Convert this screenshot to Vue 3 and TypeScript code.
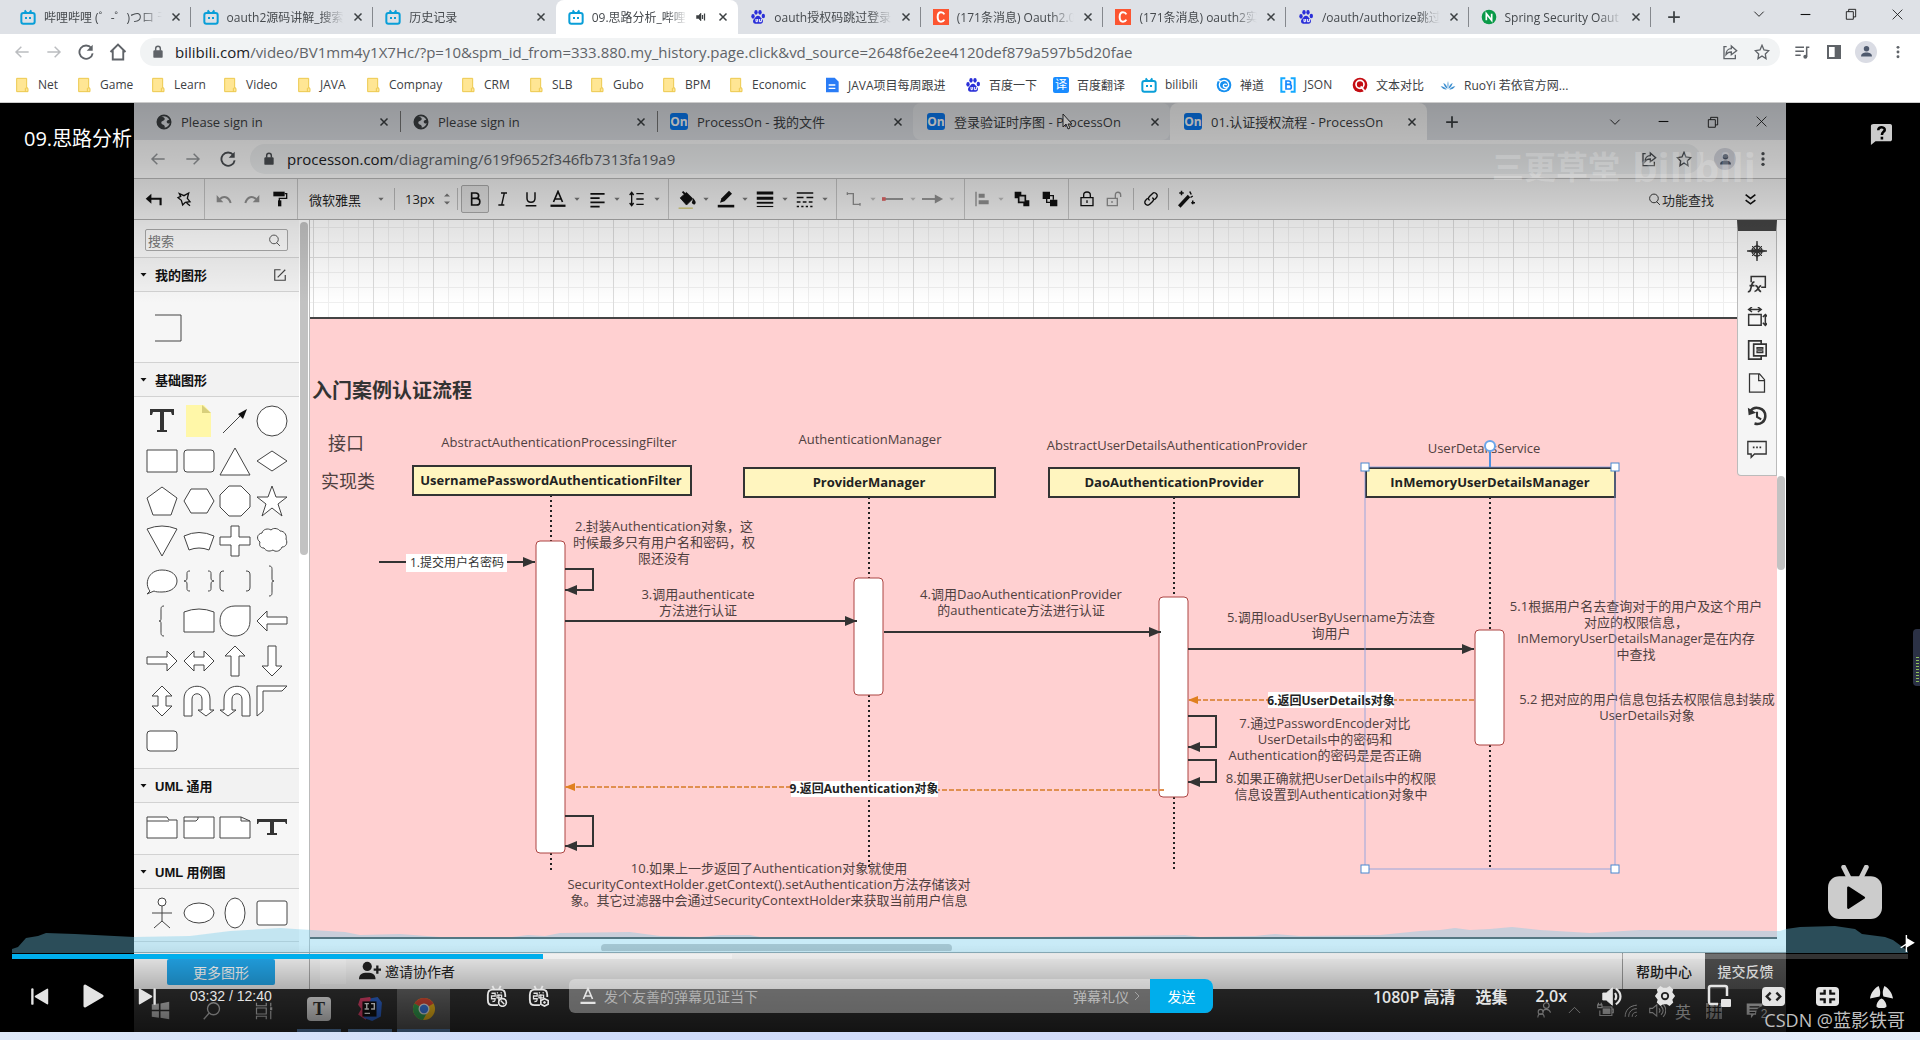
<script setup lang="ts">
import { h } from 'vue'

const glyphs: Record<string, string> = {
  bili: '<g stroke="#0a9fd8" stroke-width="3"><rect x="2" y="6" width="20" height="16" rx="3"/><path d="M7 2l3 4M17 2l-3 4M9 12v3M15 12v3"/></g>',
  paw: '<g fill="#2a2fd8" stroke="none"><ellipse cx="4.500" cy="11" rx="2.500" ry="3.500"/><ellipse cx="9" cy="5" rx="2.500" ry="3.500"/><ellipse cx="15" cy="5" rx="2.500" ry="3.500"/><ellipse cx="20" cy="10.500" rx="2.500" ry="3.500"/><path d="M12 10c3 0 4 3 6 5 3 3 1 8-3 7h-6c-4 1-6-4-3-7 2-2 3-5 6-5z"/></g><path d="M9 15v4h2v-4M14 15v4h3v-4" stroke="#fff" stroke-width="1.500"/>',
  csdn: '<rect width="24" height="24" fill="#fc5531" stroke="none"/><path d="M17 8c-1-2-3-3-5-3-4 0-5 3-5 7s1 7 5 7c2 0 4-1 5-3" stroke="#fff" stroke-width="3"/>',
  nginx: '<circle cx="12" cy="12" r="11" fill="#0a9a48" stroke="none"/><path d="M8 17V7l8 10V7" stroke="#fff" stroke-width="2.500"/>',
  close: '<path d="M5 5l14 14M19 5L5 19" stroke-width="3"/>',
  plus: '<path d="M12 2v20M2 12h20" stroke-width="3"/>',
  sound: '<path d="M3 9h4l5-5v16l-5-5H3z" fill="currentColor"/><path d="M15 8v8M19 5v14" stroke-width="2.500"/>',
  chev: '<path d="M4 8l8 8 8-8" stroke-width="1.500"/>',
  up: '<path d="M3 16l9-9 9 9" stroke-width="1.500"/>',
  min: '<path d="M3 12h18" stroke-width="2"/>',
  restore: '<path d="M4 8h12v13H4zM8 8V4h12v13h-4" stroke-width="1.500"/>',
  closeThin: '<path d="M3 3l18 18M21 3L3 21" stroke-width="1.500"/>',
  left: '<path d="M22 12H3M11 4l-8 8 8 8" stroke-width="2.200"/>',
  right: '<path d="M2 12h19M13 4l8 8-8 8" stroke-width="2.200"/>',
  reload: '<path d="M20 6a10 10 0 1 0 2 8" stroke-width="2.800"/><path d="M22 1v9h-9z" fill="currentColor" stroke="none"/>',
  home: '<path d="M2 12L12 2l10 10M5 10v12h14V10" stroke-width="2.500"/>',
  lock: '<rect x="4" y="9" width="16" height="13" rx="2" fill="currentColor" stroke="none"/><path d="M8 10V6a4 4 0 0 1 8 0v4" stroke-width="2.500"/>',
  share: '<path d="M7 4H3v18h17v-6" stroke-width="2"/><path d="M14 3l8 7-8 6v-4c-4 0-6 1-8 4 0-5 3-9 8-9z" stroke-width="2"/>',
  star: '<path d="M12 2l3 7 7 1-5 5 1 7-6-4-6 4 1-7-5-5 7-1z" stroke-width="2"/>',
  list: '<path d="M2 5h13M2 11h13M2 17h8M19 19V5h4" stroke-width="2.300"/><circle cx="17" cy="19" r="3" fill="currentColor" stroke="none"/>',
  panel: '<path d="M3 3h18v18H3z" stroke-width="3"/><path d="M13 3h8v18h-8z" fill="currentColor" stroke="none"/>',
  person: '<g fill="currentColor" stroke="none"><circle cx="12" cy="7" r="5"/><path d="M2 21c0-5 4-7 10-7s10 2 10 7z"/></g>',
  dots: '<g fill="currentColor" stroke="none"><circle cx="12" cy="4" r="2.500"/><circle cx="12" cy="12" r="2.500"/><circle cx="12" cy="20" r="2.500"/></g>',
  folder: '<path d="M4 2h15v14l2 1v5H4z" fill="#ffe694" stroke="#edc94f" stroke-width="1.500"/><path d="M17 22v-5l3-1" stroke="#edc94f" stroke-width="1.500"/>',
  doc: '<path d="M3 1h13l6 6v16H3z" fill="#2a7cf6" stroke="none"/><path d="M7 12h10M7 17h10" stroke="#fff" stroke-width="2"/>',
  zen: '<circle cx="12" cy="12" r="11" fill="#1790f0" stroke="none"/><path d="M17 17a7 7 0 1 1 2-5c0 5-8 5-8 1 0-3 4-3 5-1M3 5l5 2" stroke="#fff" stroke-width="2"/>',
  json: '<path d="M8 2H2v20h6M16 2h6v20h-6" stroke="#14a9ff" stroke-width="3"/><path d="M9 6h4c4 0 4 5 0 5H9zM9 11h5c4 0 4 7 0 7H9z" stroke="#1487ff" stroke-width="2.500"/>',
  diff: '<circle cx="12" cy="12" r="11" fill="#c40d13" stroke="none"/><circle cx="12" cy="11" r="6" stroke="#fff" stroke-width="2.500"/><path d="M13 14l6 7" stroke="#fff" stroke-width="2.500"/>',
  ruoyi: '<path d="M12 18c-1-5-1-8 0-12 1 4 1 7 0 12zM11 18C8 16 6 13 5 9c4 2 6 5 6 9zM13 18c0-4 2-7 6-9-1 4-3 7-6 9zM10 19c-4 0-7-2-9-5 4 0 7 2 9 5zM14 19c2-3 5-5 9-5-2 3-5 5-9 5z" fill="#3d8fd0" stroke="none"/>',
  globe: '<circle cx="12" cy="12" r="10" stroke-width="2.500"/><path d="M5 4c5 0 9 1 8 4s-5 2-5 5 4 2 5 5-1 4-2 4C5 21 2 16 2 11zM22 9c-4-1-6 1-6 3 1 3 4 2 5 2z" fill="currentColor" stroke="none"/>',
  reply: '<path d="M22 20v-9H4" stroke-width="3"/><path d="M9 4v14l-8-7z" fill="currentColor" stroke="none"/>',
  pinstar: '<path d="M5 4l7 3 7-4-2 8 4 5-7 1-4 4-2-7-5-4 4-2zM16 18l5 4" stroke-width="2"/>',
  undo: '<path d="M6 12c5-5 13-4 16 6" stroke-width="3"/><path d="M1 6v11h10z" fill="currentColor" stroke="none"/>',
  redo: '<path d="M18 12C13 7 5 8 2 18" stroke-width="3"/><path d="M23 6v11H13z" fill="currentColor" stroke="none"/>',
  roller: '<path d="M2 1h17v7H2z" fill="currentColor" stroke="none"/><path d="M19 4h3v7H11v4" stroke-width="2"/><path d="M9 14h5v9H9z" fill="currentColor" stroke="none"/>',
  tri: '<path d="M4 8h16l-8 9z" fill="currentColor" stroke="none"/>',
  spin: '<path d="M6 7l6-6 6 6zM6 17l6 6 6-6z" fill="currentColor" stroke="none"/>',
  bold: '<path d="M7 3h6c6 0 6 8 0 8H7zM7 11h7c7 0 7 10 0 10H7z" stroke-width="2.500"/>',
  italic: '<path d="M9 3h9M5 21h9M14 3l-4 18" stroke-width="2"/>',
  under: '<path d="M6 2v9c0 8 12 8 12 0V2M4 22h16" stroke-width="2.200"/>',
  fontA: '<path d="M6 16l6-14 6 14M8 12h8" stroke-width="2.200"/><path d="M2 21h20" stroke-width="3"/>',
  align: '<path d="M2 4h20M2 10h13M2 16h20M2 22h13" stroke-width="2.300"/>',
  spacing: '<path d="M11 4h11M11 12h11M11 20h11M4 3v18M1 6l3-4 3 4M1 18l3 4 3-4" stroke-width="2"/>',
  fill: '<path d="M4 10l8-7 8 8-8 8z" fill="currentColor"/><path d="M7 2l6 6M21 13c3 4 0 5-1 3z" stroke-width="2.500"/><path d="M2 23h18" stroke="#d8cf85" stroke-width="2"/>',
  pen: '<path d="M4 17l2-6L16 1l4 4L10 15z" fill="currentColor" stroke="none"/><path d="M1 21.500h22" stroke-width="3.500"/>',
  weight: '<path d="M1 4h22M1 11h22" stroke-width="4"/><path d="M1 17h22" stroke-width="2.500"/><path d="M1 22h22" stroke-width="1.500"/>',
  dash: '<path d="M1 4h22" stroke-width="2"/><path d="M1 10h22" stroke-width="2" stroke-dasharray="9 4"/><path d="M1 16h22" stroke-width="2" stroke-dasharray="5 3"/><path d="M1 22h22" stroke-width="2" stroke-dasharray="3 3"/>',
  conn: '<path d="M2 4h9v16h10M2 2v4M21 18v4" stroke-width="2"/>',
  line: '<path d="M1 12h22" stroke-width="2"/><path d="M0 12h4" stroke="#d66" stroke-width="4"/>',
  arrow: '<path d="M0 12h16" stroke-width="2"/><path d="M14 7l9 5-9 5z" fill="currentColor" stroke="none"/>',
  alignObj: '<path d="M3 1v22" stroke-width="2"/><path d="M7 4h9v6H7zM7 14h15v6H7z" fill="currentColor" stroke="none"/>',
  front: '<path d="M1 1h10v10H1zM14 14h9v9h-9z" fill="currentColor" stroke="none"/><path d="M7 7h10v10H7z" fill="#ddd" stroke-width="2.500"/>',
  back: '<path d="M1 1h11v11H1zM12 13h11v10H12z" fill="currentColor" stroke="none"/><path d="M12 7h5v6M7 12v5h5" stroke-width="2"/>',
  lockO: '<path d="M3 10h18v12H3zM7 10V6c0-6 10-6 10 0v4M12 14v4" stroke-width="2"/>',
  unlock: '<path d="M2 11h15v11H2zM14 11V6c0-6 8-5 8 0v3M9 15v3" stroke-width="2"/>',
  link: '<path d="M10 14c-3-2-2-4 0-6l4-4c4-4 10 2 6 6l-3 3M14 10c3 2 2 4 0 6l-4 4c-4 4-10-2-6-6l3-3" stroke-width="2"/>',
  wand: '<path d="M3 22L16 8" stroke-width="4.500"/><path d="M17 2l2 4M21 8l-3 2M6 1v6M3 4h6M21 14v5M19 17h5" stroke-width="2"/>',
  find: '<circle cx="11" cy="10" r="8" stroke-width="1.800"/><path d="M16 16l6 6" stroke-width="1.800"/>',
  dchev: '<path d="M3 3l9 7 9-7M3 13l9 7 9-7" stroke-width="3"/>',
  edit: '<path d="M13 3H3v18h18V12M8 16L21 3" stroke-width="2"/>',
  compass: '<path d="M12 0l1 10 11 2-11 2-1 10-1-10-11-2 11-2z" fill="currentColor"/><circle cx="12" cy="12" r="6" stroke-width="1.600"/><path d="M6 6l12 12M18 6L6 18" stroke-width="1.200"/>',
  fx: '<path d="M5 10V3h17v13h-5" stroke-width="1.800"/><path d="M9 10c-3-1-3 3-4 6s-1 6-4 5M3 14h6M10 14c4 0 3 7 7 7M17 14c-3 0-4 7-8 7" stroke-width="2"/>',
  size: '<path d="M2 9h15v13H2zM3 3h13M6 0L2 3l4 3M13 0l4 3-4 3M22 9v13M19 12l3-3 3 3M19 19l3 3 3-3" stroke-width="1.800"/>',
  pages: '<path d="M17 5V1H2v22h15v-3M8 5h15v14H8z" stroke-width="2"/><path d="M12 9h7v2h-7zM12 13h7v2h-7z" stroke-width="1.500"/>',
  page: '<path d="M3 1h12l6 7v15H3zM14 1v8h7" stroke-width="1.500"/>',
  history: '<path d="M4 6c5-7 18-4 18 6 0 7-6 11-13 9" stroke-width="3"/><path d="M1 2l1 9 9-3z" fill="currentColor" stroke="none"/><path d="M12 7v6l5 3" stroke-width="2.500"/>',
  chat: '<path d="M1 3h22v15H9l-4 4v-4H1z" stroke-width="1.600"/><path d="M7 10h2M11 10h2M15 10h2" stroke-width="2"/>',
  invite: '<g fill="currentColor" stroke="none"><circle cx="9" cy="7" r="5"/><path d="M0 21c0-5 3-7 9-7s9 2 9 7z"/></g><path d="M20 6v9M16 10.500h8" stroke-width="2.500"/>',
  windows: '<path d="M1 4l9-1v8H1zM12 3l11-2v10H12zM1 13h9v8l-9-1zM12 13h11v10l-11-2z" fill="currentColor" stroke="none"/>',
  loupe: '<circle cx="14" cy="9" r="8" stroke-width="1.800"/><path d="M8 15l-7 8" stroke-width="1.800"/>',
  tasks: '<path d="M2 1v4h13V1M2 8h13v8H2zM2 23v-4h13v4M21 1v5M21 12v11" stroke-width="1.600"/><path d="M20 7h3v4h-3z" fill="currentColor" stroke="none"/>',
  idea: '<path d="M3 2l9-1 4 8-8 13-7-5 3-5-3-4z" fill="#e0416b" stroke="none"/><path d="M13 2l6-1 4 5-1 13-8 4-8-3z" fill="#2e66d0" stroke="none"/><path d="M5 5h13v14H5z" fill="#111" stroke="none"/><path d="M7 7h4M9 7v5M7 12h4M13 7h3v5h-3M7 16h5" stroke="#fff" stroke-width="1.300"/>',
  chrome: '<circle cx="12" cy="12" r="11" fill="#f5bc1c" stroke="none"/><path d="M12 12L2.500 6.500A11 11 0 0 1 21.500 6.500z" fill="#e04a38" stroke="none"/><path d="M12 12L2.500 6.500A11 11 0 0 0 11 23l5-9z" fill="#35a553" stroke="none"/><circle cx="12" cy="12" r="5.500" fill="#eee" stroke="none"/><circle cx="12" cy="12" r="4.200" fill="#3f80e8" stroke="none"/>',
  people: '<circle cx="16" cy="5" r="4" stroke-width="1.600"/><path d="M11 14c1-5 9-5 11 1M4 22c0-7 9-7 9 0" stroke-width="1.600"/><circle cx="8" cy="14" r="3.500" stroke-width="1.600"/>',
  battery: '<path d="M7 7h14v12H4V12M21 10h2v5h-2M1 4h6v4H1zM2 1v3M6 1v3" stroke-width="1.600"/><path d="M8 9h11v8H8z" fill="currentColor" stroke="none"/>',
  wifi: '<path d="M2 22C2 10 10 3 22 2M8 22C8 14 13 8 22 8M14 22c0-5 3-8 8-8M19 22l3-3" stroke-width="1.700"/>',
  volThin: '<path d="M1 9h4l6-5v16l-6-5H1zM14 9c2 2 2 4 0 6M17 6c4 4 4 8 0 12M20 3c5 6 5 12 0 18" stroke-width="1.500"/>',
  note: '<path d="M1 2h22v16H11l-4 5v-5H1z" fill="currentColor" stroke="none"/><path d="M5 7h14M5 11h14M5 15h8" stroke="#222" stroke-width="1.800"/>',
  prev: '<path d="M3 3v18" stroke-width="3" stroke-linecap="round"/><path d="M22 3v18L7 12z" fill="currentColor" stroke-linejoin="round" stroke-width="2"/>',
  play: '<path d="M4 2l17 10L4 22z" fill="currentColor" stroke-width="3" stroke-linejoin="round"/>',
  next: '<path d="M21 3v18" stroke-width="3" stroke-linecap="round"/><path d="M2 3v18l15-9z" fill="currentColor" stroke-linejoin="round" stroke-width="2"/>',
  barrage: '<path d="M13 22H7c-4 0-5-2-5-6v-5c0-4 2-6 5-6h9c4 0 5 2 5 6v2M7 1l2 4M16 1l-2 4" stroke-width="2"/><path d="M6 9h4v3H6v3h4c0 3-1 3-3 3M12 8l1 1M17 8l-1 1M12 11h5v3h-5zM14 10v7" stroke-width="1.400"/><circle cx="18" cy="19" r="4.200" stroke-width="1.800"/><path d="M16 17l4 4" stroke-width="1.500"/>',
  barrageSet: '<path d="M13 22H7c-4 0-5-2-5-6v-5c0-4 2-6 5-6h9c4 0 5 2 5 6v2M7 1l2 4M16 1l-2 4" stroke-width="2"/><path d="M6 9h4v3H6v3h4c0 3-1 3-3 3M12 8l1 1M17 8l-1 1M12 11h5v3h-5zM14 10v7" stroke-width="1.400"/><path d="M18 15l4 2v4l-4 2-4-2v-4z" stroke-width="1.800"/><circle cx="18" cy="19" r="1" fill="currentColor"/>',
  volume: '<path d="M2 8h4l7-6v20l-7-6H2z" fill="currentColor"/><path d="M16 8c2 3 2 5 0 8M17 3c7 5 7 13 0 18" stroke-width="2.500"/>',
  gear: '<path d="M7 1l3 2h4l3-2 4 4-1 3 3 4-3 4 1 3-4 4-3-2h-4l-3 2-4-4 1-3-3-4 3-4-1-3z" fill="currentColor" stroke="none"/><circle cx="12" cy="12" r="4.500" fill="#222" stroke="none"/><circle cx="12" cy="12" r="2.500" fill="currentColor" stroke="none"/>',
  pip: '<path d="M11 20H4c-2 0-2-1-2-3V4c0-2 1-2 2-2h14c2 0 2 1 2 2v8" stroke-width="2.500"/><rect x="14" y="15" width="10" height="8" rx="1" fill="currentColor" stroke="none"/>',
  webfull: '<rect x="0" y="2" width="24" height="20" rx="4" fill="currentColor" stroke="none"/><path d="M9 8l-4 4 4 4M15 8l4 4-4 4" stroke="#222" stroke-width="2.500"/>',
  full: '<rect x="0" y="2" width="24" height="20" rx="4" fill="currentColor" stroke="none"/><path d="M9 5v4H4M15 5v4h5M9 19v-4H4M15 19v-4h5" stroke="#111" stroke-width="2.500"/>',
  fan: '<g fill="currentColor" stroke="none"><path d="M9 1c2 5 2 8 1 11L0 14C1 8 4 4 9 1zM15 1c-2 5-2 8-1 11l10 2c-1-6-4-10-9-13zM12 14c3 1 6 6 5 9-3 2-7 2-10 0-1-3 2-8 5-9z"/></g>',
  help: '<path d="M4 1h18c1 0 2 1 2 2v15c0 1-1 2-2 2H6l-5 4V3c0-1 1-2 3-2z" fill="#ccc" stroke="none"/><path d="M9 8c0-5 8-4 7 0-1 2-3 2-3 5M13 15v3" stroke="#000" stroke-width="2.800"/>',
  tv: '<path d="M7 1l3 6M17 1l-3 6" stroke="#ccc" stroke-width="2.200" stroke-linecap="round"/><rect x="0" y="5" width="24" height="19" rx="5" fill="#ccc" stroke="none"/><path d="M9 10l7 4.500L9 19z" fill="#000" stroke="#000" stroke-linejoin="round"/>',
  marker: '<path d="M9 0v24M1 18l8-5M9 5l10 6-10 6z" fill="#fff" stroke="#fff" stroke-width="2"/>',
}

const Ico = (p: { n: string; s?: number }) =>
  h('svg', {
    viewBox: '0 0 24 24', width: p.s ?? 16, height: p.s ?? 16,
    fill: 'none', stroke: 'currentColor', 'aria-hidden': 'true', innerHTML: glyphs[p.n],
  })
Ico.props = ['n', 's']

const tabs = [
  { icon: 'bili', t: '哔哩哔哩 (゜-゜)つロ 干' },
  { icon: 'bili', t: 'oauth2源码讲解_搜索_' },
  { icon: 'bili', t: '历史记录' },
  { icon: 'bili', t: '09.思路分析_哔哩', on: true },
  { icon: 'paw', t: 'oauth授权码跳过登录' },
  { icon: 'csdn', t: '(171条消息) Oauth2.0' },
  { icon: 'csdn', t: '(171条消息) oauth2实' },
  { icon: 'paw', t: '/oauth/authorize跳过' },
  { icon: 'nginx', t: 'Spring Security Oaut' },
]

const marks = [
  { i: 'folder', t: 'Net', w: 62 }, { i: 'folder', t: 'Game', w: 74 }, { i: 'folder', t: 'Learn', w: 72 },
  { i: 'folder', t: 'Video', w: 74 }, { i: 'folder', t: 'JAVA', w: 69 }, { i: 'folder', t: 'Compnay', w: 95 },
  { i: 'folder', t: 'CRM', w: 68 }, { i: 'folder', t: 'SLB', w: 61 }, { i: 'folder', t: 'Gubo', w: 72 },
  { i: 'folder', t: 'BPM', w: 67 }, { i: 'folder', t: 'Economic', w: 96 }, { i: 'doc', t: 'JAVA项目每周跟进', w: 141 },
  { i: 'paw', t: '百度一下', w: 88 }, { i: 'yi', t: '百度翻译', w: 88 }, { i: 'bili', t: 'bilibili', w: 75 },
  { i: 'zen', t: '禅道', w: 64 }, { i: 'json', t: 'JSON', w: 72 }, { i: 'diff', t: '文本对比', w: 88 },
  { i: 'ruoyi', t: 'RuoYi 若依官方网...', w: 140 },
]

const innerTabs = [
  { i: 'globe', t: 'Please sign in' }, { i: 'globe', t: 'Please sign in' },
  { i: 'on', t: 'ProcessOn - 我的文件' }, { i: 'on', t: '登录验证时序图 - ProcessOn', c: 'hover' },
  { i: 'on', t: '01.认证授权流程 - ProcessOn', c: 'on' },
]

interface Tool { i?: string; w: number; c?: string; s?: number; t?: string }
const tools: Tool[] = [
  { i: 'reply', w: 30, s: 17 }, { i: 'pinstar', w: 31 }, { w: 10, c: 'sep' },
  { i: 'undo', w: 29, c: 'dim' }, { i: 'redo', w: 28, c: 'dim' }, { i: 'roller', w: 27 }, { w: 8, c: 'sep' },
  { t: '微软雅黑', w: 70 }, { i: 'tri', w: 20, c: 'mid', s: 8 }, { w: 6, c: 'short' },
  { t: '13px', w: 44 }, { i: 'spin', w: 12, c: 'mid', s: 12 }, { w: 8, c: 'short' },
  { i: 'bold', w: 28, c: 'pressed' }, { i: 'italic', w: 28 }, { i: 'under', w: 28 },
  { i: 'fontA', w: 26, s: 18 }, { i: 'tri', w: 12, c: 'mid', s: 8 },
  { i: 'align', w: 28, s: 17 }, { i: 'tri', w: 12, c: 'mid', s: 8 },
  { i: 'spacing', w: 28 }, { i: 'tri', w: 11, c: 'mid', s: 8 }, { w: 12, c: 'sep' },
  { i: 'fill', w: 24, s: 19 }, { i: 'tri', w: 15, c: 'mid', s: 8 },
  { i: 'pen', w: 26, s: 18 }, { i: 'tri', w: 12, c: 'mid', s: 8 },
  { i: 'weight', w: 28, s: 18 }, { i: 'tri', w: 12, c: 'mid', s: 8 },
  { i: 'dash', w: 28, s: 18 }, { i: 'tri', w: 11, c: 'mid', s: 8 }, { w: 12, c: 'sep' },
  { i: 'conn', w: 24, c: 'dim' }, { i: 'tri', w: 14, c: 'faint', s: 8 },
  { i: 'line', w: 26, c: 'dim', s: 22 }, { i: 'tri', w: 14, c: 'faint', s: 8 },
  { i: 'arrow', w: 26, c: 'dim', s: 22 }, { i: 'tri', w: 12, c: 'faint', s: 8 }, { w: 12, c: 'sep' },
  { i: 'alignObj', w: 24, c: 'dim' }, { i: 'tri', w: 14, c: 'faint', s: 8 },
  { i: 'front', w: 28 }, { i: 'back', w: 28 }, { w: 9, c: 'sep' },
  { i: 'lockO', w: 27 }, { i: 'unlock', w: 28, c: 'dim' }, { w: 10, c: 'short' },
  { i: 'link', w: 26 }, { w: 8, c: 'short' }, { i: 'wand', w: 28, s: 18 },
]

const solid = 'fill="#333" stroke="none"'
const basic: string[] = [
  `<path ${solid} d="M4 4h24v6h-2l-1-3h-7v18h3v2H11v-2h3V7H7l-1 3H4z"/>`,
  '<path fill="#fff7a8" stroke="none" d="M3 0h18l7 8v24H3z"/><path fill="#d8cf7c" stroke="none" d="M19 0l9 8h-9z"/>',
  '<path d="M4 28L22 10"/><path fill="#111" stroke="none" d="M28 4l-4 10-5-5z"/>',
  '<circle cx="16" cy="16" r="15"/>',
  '<path d="M1 5h30v22H1z"/>',
  '<rect x="1" y="5" width="30" height="22" rx="3"/>',
  '<path d="M16 3l15 27H1z"/>',
  '<path d="M16 6l15 10-15 10L1 16z"/>',
  '<path d="M16 2l15 11-6 17H7L1 13z"/>',
  '<path d="M8 4h16l7 12-7 12H8L1 16z"/>',
  '<path d="M10 1h12l9 9v12l-9 9H10l-9-9V10z"/>',
  '<path d="M16 1l4 11h11l-9 7 4 12-10-8-10 8 4-12-9-7h11z"/>',
  '<path d="M1 4q15-6 30 0L16 31z"/>',
  '<path d="M1 11q15-7 30 0l-5 14q-10-4-20 0z"/>',
  '<path d="M12 1h8v11h11v8H20v11h-8V20H1v-8h11z"/>',
  '<path d="M6 8c1-4 6-5 9-3 3-3 8-1 9 1 5 0 7 5 6 8 2 4 0 8-4 8-2 5-7 5-9 3-4 2-7 1-9-2-4 0-5-3-4-6-4-3-3-8 2-9z"/>',
  '<path d="M4 26c-6-7-2-21 12-21 20 0 20 22 0 22-4 0-6 0-8-1l-7 3z"/>',
  '<path fill="none" d="M7 6c-3 0-3 1-3 3v4c0 2-1 3-3 3 2 0 3 1 3 3v4c0 2 0 3 3 3M25 6c3 0 3 1 3 3v4c0 2 1 3 3 3-2 0-3 1-3 3v4c0 2 0 3-3 3"/>',
  '<path fill="none" d="M5 6c-3 0-4 1-4 4v12c0 3 1 4 4 4M27 6c3 0 4 1 4 4v12c0 3-1 4-4 4"/>',
  '<path fill="none" d="M13 1c3 0 3 2 3 4v8c0 2 0 3 2 3-2 0-2 1-2 3v8c0 2 0 4-3 4"/>',
  '<path fill="none" d="M18 1c-3 0-3 2-3 4v8c0 2 0 3-2 3 2 0 2 1 2 3v8c0 2 0 4 3 4"/>',
  '<path d="M1 7q15-6 30 0v20H1z"/>',
  '<path d="M16 1h15v15c0 20-30 20-30 0 0-9 6-15 15-15z"/>',
  '<path d="M1 16l10-10v6h20v7H11v7z"/>',
  '<path d="M31 16L21 6v6H1v7h20v7z"/>',
  '<path d="M1 16l10-10v6h10V6l10 10-10 10v-6H11v6z"/>',
  '<path d="M16 1l10 10h-6v20h-8V11H6z"/>',
  '<path d="M16 31L6 21h6V1h8v20h6z"/>',
  '<path d="M16 1l10 10h-6v10h6L16 31 6 21h6V11H6z"/>',
  '<path d="M1 31V14C1-3 27-3 27 14v11h4l-8 6-8-6h4V14c0-7-10-7-10 0v17z"/>',
  '<path d="M31 31V14C31-3 5-3 5 14v11H1l8 6 8-6h-4V14c0-7 10-7 10 0v17z"/>',
  '<path d="M1 1h30l-5 5H7v20l-6 5z"/>',
  '<rect x="1" y="6" width="30" height="20" rx="3"/>',
]
const uml: string[] = [
  '<path d="M1 9V6h20l2 3h8v18H1zM1 10h22"/>',
  '<path d="M1 6h30v21H1zM1 10h12l2-2V6"/>',
  '<path d="M1 6h21l9 4v17H1zM22 6v4h9"/>',
  `<path ${solid} d="M1 8h30v5h-1l-1-2H18v11h3v2H11v-2h3V11H3l-1 2H1z"/>`,
]
const usecase: string[] = [
  '<path fill="none" d="M16 9v15M6 16h20M16 24l-8 7M16 24l8 7"/><circle cx="16" cy="5" r="4"/>',
  '<ellipse cx="16" cy="16" rx="15" ry="10"/>',
  '<ellipse cx="16" cy="16" rx="10" ry="15"/>',
  '<rect x="1" y="4" width="30" height="24" rx="2"/>',
]
const groups = [
  { name: '基础图形', cls: 'basic', items: basic },
  { name: 'UML 通用', cls: 'uml', items: uml },
  { name: 'UML 用例图', cls: 'usecase', items: usecase },
]

const lifelines = [
  { x: 551, bx: 413, bw: 278, by: 466, name: 'UsernamePasswordAuthenticationFilter', top: 541, bot: 853, end: 873 },
  { x: 869, bx: 744, bw: 251, by: 468, name: 'ProviderManager', top: 578, bot: 695, end: 870 },
  { x: 1174, bx: 1049, bw: 250, by: 468, name: 'DaoAuthenticationProvider', top: 597, bot: 797, end: 870 },
  { x: 1490, bx: 1366, bw: 249, by: 468, name: 'InMemoryUserDetailsManager', top: 630, bot: 745, end: 869 },
]
const ifaces = [
  { x: 559, y: 447, t: 'AbstractAuthenticationProcessingFilter' },
  { x: 870, y: 444, t: 'AuthenticationManager' },
  { x: 1177, y: 450, t: 'AbstractUserDetailsAuthenticationProvider' },
  { x: 1484, y: 453, t: 'UserDetailsService' },
]
const notes = [
  { x: 664, y: 531, l: ['2.封装Authentication对象，这', '时候最多只有用户名和密码，权', '限还没有'] },
  { x: 698, y: 599, l: ['3.调用authenticate', '方法进行认证'] },
  { x: 1021, y: 599, l: ['4.调用DaoAuthenticationProvider', '的authenticate方法进行认证'] },
  { x: 1331, y: 622, l: ['5.调用loadUserByUsername方法查', '询用户'] },
  { x: 1636, y: 611, l: ['5.1根据用户名去查询对于的用户及这个用户', '对应的权限信息，', 'InMemoryUserDetailsManager是在内存', '中查找'] },
  { x: 1647, y: 704, l: ['5.2 把对应的用户信息包括去权限信息封装成', 'UserDetails对象'] },
  { x: 1325, y: 728, l: ['7.通过PasswordEncoder对比', 'UserDetails中的密码和', 'Authentication的密码是是否正确'] },
  { x: 1331, y: 783, l: ['8.如果正确就把UserDetails中的权限', '信息设置到Authentication对象中'] },
  { x: 769, y: 873, l: ['10.如果上一步返回了Authentication对象就使用', 'SecurityContextHolder.getContext().setAuthentication方法存储该对', '象。其它过滤器中会通过SecurityContextHolder来获取当前用户信息'] },
]
const calls = [
  { x1: 379, x2: 535, y: 562 }, { x1: 565, x2: 857, y: 621 },
  { x1: 884, x2: 1161, y: 632 }, { x1: 1188, x2: 1474, y: 649 },
]
const loops = [
  { x: 565, a: 569, b: 590 }, { x: 565, a: 816, b: 846 },
  { x: 1188, a: 716, b: 747 }, { x: 1188, a: 760, b: 782 },
]
const handles = [[1365, 467], [1615, 467], [1365, 869], [1615, 869]]
const dock = ['compass', 'fx', 'size', 'pages', 'page', 'history', 'chat']
</script>

<template>
  <div class="screen">
    <header class="strip">
      <div class="tabs">
        <div v-for="(t, k) in tabs" :key="k" class="tab" :class="{ on: t.on, before: k === 2 }">
          <Ico :n="t.icon" :s="16" />
          <span class="label">{{ t.t }}</span>
          <Ico v-if="t.on" n="sound" :s="12" class="snd" />
          <button type="button" aria-label="关闭标签页"><Ico n="close" :s="12" /></button>
        </div>
      </div>
      <button type="button" class="add" aria-label="新标签页"><Ico n="plus" :s="14" /></button>
      <div class="wins">
        <button type="button" aria-label="搜索标签页"><Ico n="chev" :s="14" /></button>
        <button type="button" aria-label="最小化"><Ico n="min" :s="13" /></button>
        <button type="button" aria-label="还原"><Ico n="restore" :s="14" /></button>
        <button type="button" aria-label="关闭"><Ico n="closeThin" :s="13" /></button>
      </div>
    </header>

    <nav class="bar">
      <button type="button" class="off" aria-label="后退"><Ico n="left" /></button>
      <button type="button" class="off" aria-label="前进"><Ico n="right" /></button>
      <button type="button" aria-label="刷新"><Ico n="reload" /></button>
      <button type="button" aria-label="主页"><Ico n="home" :s="18" /></button>
      <div class="omni">
        <Ico n="lock" :s="14" />
        <a class="url" href="#"><b>bilibili.com</b>/video/BV1mm4y1X7Hc/?p=10&amp;spm_id_from=333.880.my_history.page.click&amp;vd_source=2648f6e2ee4120def879a597b5d20fae</a>
        <button type="button" aria-label="分享"><Ico n="share" /></button>
        <button type="button" aria-label="收藏"><Ico n="star" /></button>
      </div>
      <button type="button" aria-label="媒体"><Ico n="list" /></button>
      <button type="button" aria-label="侧边栏"><Ico n="panel" /></button>
      <button type="button" aria-label="用户"><span class="avatar"><Ico n="person" :s="13" /></span></button>
      <button type="button" aria-label="菜单"><Ico n="dots" :s="14" /></button>
    </nav>

    <nav class="marks">
      <a v-for="m in marks" :key="m.t" href="#" :style="{ width: m.w + 'px' }">
        <i v-if="m.i === 'yi'" class="yi">译</i>
        <Ico v-else :n="m.i" :s="16" />
        <span>{{ m.t }}</span>
      </a>
    </nav>

    <main class="player">
      <section class="frame">
        <div class="istrip">
          <div v-for="(t, k) in innerTabs" :key="k" class="itab" :class="t.c">
            <i v-if="t.i === 'on'" class="onlogo">On</i>
            <Ico v-else :n="t.i" :s="16" />
            <span class="label">{{ t.t }}</span>
            <button type="button" aria-label="关闭标签页"><Ico n="close" :s="12" /></button>
          </div>
          <button type="button" class="add" aria-label="新标签页"><Ico n="plus" :s="14" /></button>
          <div class="iwins">
            <button type="button" aria-label="搜索标签页"><Ico n="chev" :s="14" /></button>
            <button type="button" aria-label="最小化"><Ico n="min" :s="13" /></button>
            <button type="button" aria-label="还原"><Ico n="restore" :s="14" /></button>
            <button type="button" aria-label="关闭"><Ico n="closeThin" :s="13" /></button>
          </div>
        </div>
        <div class="ibar">
          <button type="button" class="off" aria-label="后退"><Ico n="left" /></button>
          <button type="button" class="off" aria-label="前进"><Ico n="right" /></button>
          <button type="button" aria-label="刷新"><Ico n="reload" /></button>
          <div class="iomni">
            <Ico n="lock" :s="14" />
            <a class="url" href="#"><b>processon.com</b>/diagraming/619f9652f346fb7313fa19a9</a>
            <button type="button" aria-label="分享"><Ico n="share" /></button>
            <button type="button" aria-label="收藏"><Ico n="star" /></button>
          </div>
          <button type="button" class="who" aria-label="用户"><span class="avatar"><Ico n="person" :s="13" /></span></button>
          <button type="button" aria-label="菜单"><Ico n="dots" :s="16" /></button>
        </div>
        <div class="tools">
          <template v-for="(t, k) in tools" :key="k">
            <span v-if="!t.i && !t.t" class="gap" :class="t.c" :style="{ width: t.w + 'px' }"></span>
            <button v-else type="button" class="tool" :class="[t.c, { word: t.t }]" :style="{ width: t.w + 'px' }">
              <Ico v-if="t.i" :n="t.i" :s="t.s ?? 16" />{{ t.t }}
            </button>
          </template>
          <button type="button" class="lookup"><Ico n="find" :s="13" />功能查找</button>
          <button type="button" class="more" aria-label="展开"><Ico n="dchev" :s="13" /></button>
        </div>

        <div class="work">
          <aside class="side">
            <div class="palette">
              <label class="search"><input type="text" placeholder="搜索" aria-label="搜索" /><Ico n="find" :s="13" /></label>
              <h3><Ico n="tri" :s="9" />我的图形<Ico n="edit" :s="14" class="edit" /></h3>
              <div class="mine"><svg width="27" height="28" fill="none" stroke="#444" stroke-width="1"><path d="M0 1h26v26H0" /></svg></div>
              <template v-for="g in groups" :key="g.name">
                <h3><Ico n="tri" :s="9" />{{ g.name }}</h3>
                <div class="shapes" :class="g.cls">
                  <svg v-for="(s, k) in g.items" :key="k" viewBox="0 0 32 32" width="32" height="32" fill="#fff" stroke="#444" v-html="s"></svg>
                </div>
              </template>
              <div class="rest"></div>
            </div>
            <div class="vscroll"><i></i></div>
          </aside>

          <div class="canvas">
            <svg class="diagram" viewBox="310 220 1468 731" width="1468" height="731">
              <defs>
                <pattern id="grid" x="313" y="257" width="60" height="60" patternUnits="userSpaceOnUse" shape-rendering="crispEdges">
                  <path d="M15 0h1v60h-1zM30 0h1v60h-1zM45 0h1v60h-1zM0 15h60v1H0zM0 30h60v1H0zM0 45h60v1H0z" fill="#efefef" />
                  <path d="M0 0h1v60H0zM0 0h60v1H0z" fill="#dcdcdc" />
                </pattern>
                <marker id="head" viewBox="0 0 12 10" refX="12" refY="5" markerWidth="12" markerHeight="10" markerUnits="userSpaceOnUse" orient="auto"><path d="M0 0l12 5-12 5z" fill="#333" /></marker>
                <marker id="headO" viewBox="0 0 10 8" refX="10" refY="4" markerWidth="10" markerHeight="8" markerUnits="userSpaceOnUse" orient="auto"><path d="M0 0l10 4-10 4z" fill="#e08020" /></marker>
              </defs>
              <rect x="310" y="220" width="1468" height="731" fill="#fff" />
              <rect x="310" y="220" width="1468" height="98" fill="url(#grid)" />
              <rect x="306" y="318" width="1480" height="620" fill="#ffd0d1" stroke="#444" stroke-width="2" />
              <text class="h" x="312" y="398">入门案例认证流程</text>
              <text class="k" x="346" y="450">接口</text>
              <text class="k" x="348" y="488">实现类</text>
              <text v-for="f in ifaces" :key="f.t" class="n" :x="f.x" :y="f.y">{{ f.t }}</text>
              <g v-for="l in lifelines" :key="l.x">
                <path class="dots" :d="`M${l.x} ${l.by + 29}V${l.top}M${l.x} ${l.bot}V${l.end}`" />
                <rect :x="l.bx" :y="l.by" :width="l.bw" height="29" fill="#fff5bf" stroke="#333" stroke-width="2" />
                <text class="b" :x="l.x" :y="l.by + 19">{{ l.name }}</text>
                <rect :x="l.x - 15" :y="l.top" width="29" :height="l.bot - l.top" rx="4" fill="#fff" stroke="#ac4543" />
              </g>
              <path v-for="c in calls" :key="c.y" class="call" :d="`M${c.x1} ${c.y}H${c.x2}`" marker-end="url(#head)" />
              <path v-for="c in loops" :key="c.a" class="call" :d="`M${c.x} ${c.a}h28V${c.b}H${c.x}`" marker-end="url(#head)" />
              <path class="ret" d="M1474 700H1188" marker-end="url(#headO)" />
              <path class="ret" d="M1164 790H938" />
              <path class="ret" d="M791 787H565" marker-end="url(#headO)" />
              <rect x="406" y="554" width="101" height="18" fill="#fff" />
              <text class="n dk" x="457" y="567">1.提交用户名密码</text>
              <rect x="1268" y="692" width="126" height="16" fill="#fff" />
              <text class="b r" x="1331" y="705">6.返回UserDetails对象</text>
              <rect x="791" y="781" width="147" height="16" fill="#fff" />
              <text class="b r" x="864" y="793">9.返回Authentication对象</text>
              <text v-for="n in notes" :key="n.x + n.y" class="n" :y="n.y"><tspan v-for="(s, k) in n.l" :key="k" :x="n.x" :y="n.y + k * 16">{{ s }}</tspan></text>
              <rect x="1365" y="467" width="250" height="402" fill="none" stroke="#7f9be0" stroke-opacity=".8" />
              <path d="M1490 451v16" stroke="#4a90e2" stroke-width="2" />
              <circle cx="1490" cy="446" r="5" fill="#fff" stroke="#6aa6ea" stroke-width="2" />
              <rect v-for="p in handles" :key="p.join()" :x="p[0] - 4" :y="p[1] - 4" width="8" height="8" fill="#fff" stroke="#4a88d0" />
              <rect x="601" y="944" width="351" height="8" rx="4" fill="#c4c4c4" />
            </svg>
            <div class="dock">
              <button v-for="d in dock" :key="d" type="button" :aria-label="d"><Ico :n="d" :s="20" /></button>
            </div>
          </div>
          <div class="vscroll outer"><i></i></div>
        </div>

        <div class="foot">
          <div class="moreShapes"><button type="button">更多图形</button></div>
          <i class="swatch"></i>
          <button type="button" class="invite"><Ico n="invite" :s="22" />邀请协作者</button>
          <button type="button" class="hc">帮助中心</button>
          <button type="button" class="fb">提交反馈</button>
        </div>
        <div class="taskbar">
          <div class="apps">
            <span><Ico n="windows" :s="19" /></span>
            <span><Ico n="loupe" :s="18" /></span>
            <span><Ico n="tasks" :s="18" /></span>
            <span class="run"><i class="typora">T</i></span>
            <span class="run"><Ico n="idea" :s="26" /></span>
            <span class="run cur"><Ico n="chrome" :s="24" /></span>
          </div>
          <div class="tray">
            <span><Ico n="people" :s="17" /></span><span class="wide"><Ico n="up" :s="15" /></span><span><Ico n="battery" :s="17" /></span>
            <span><Ico n="wifi" :s="14" /></span><span><Ico n="volThin" :s="17" /></span><span class="zh">英</span><span class="zh wide"><i>拼</i></span>
            <span class="nt"><Ico n="note" :s="17" /><b>2</b></span>
          </div>
        </div>
      </section>

      <div class="shade top"></div>
      <div class="shade bottom"></div>
      <div class="brand"><span>三更草堂</span><em>bilibili</em></div>
      <h1>09.思路分析</h1>
      <svg class="mouse" width="10" height="17" viewBox="0 0 10 17"><path d="M1 1v13l3-3 2 5 2-1-2-4h4z" fill="#bbb" stroke="#222" /></svg>
      <button type="button" class="helpBtn" aria-label="反馈"><Ico n="help" :s="22" /></button>
      <button type="button" class="tvBtn" aria-label="播放"><Ico n="tv" :s="54" /></button>
      <div class="meter"><i></i></div>

      <div class="overlay">
        <div class="progress">
          <svg viewBox="12 924 1896 29" preserveAspectRatio="none" height="29"><path d="M12 953V949L18 947L26 938L38 936L46 933L75 934L134 937L190 936L230 931L280 928L295 929L345 932L360 935L400 934L440 937L512 937L528 935L545 936L560 933L630 932L660 936L700 937L720 935L750 935L760 937L1040 937L1120 936L1185 935L1200 937L1255 936L1275 934L1300 936L1380 935L1420 931L1440 930L1455 928L1470 930L1490 929L1512 927L1540 930L1590 933L1640 930L1780 931L1786 929L1800 927L1835 926L1855 929L1862 934L1885 937L1893 940L1908 951V953z" fill="#71cbea" fill-opacity=".38" /></svg>
          <div class="track"><i class="buf"></i><i class="done"></i></div>
          <Ico n="marker" :s="17" class="thumb" />
        </div>
        <div class="controls">
          <button type="button" class="pn" aria-label="上一个"><Ico n="prev" :s="19" /></button>
          <button type="button" class="pn" aria-label="播放"><Ico n="play" :s="24" /></button>
          <button type="button" class="pn" aria-label="下一个"><Ico n="next" :s="19" /></button>
          <span class="time">03:32 / 12:40</span>
          <button type="button" class="dm" aria-label="弹幕开关"><Ico n="barrage" :s="22" /></button>
          <button type="button" class="dm" aria-label="弹幕设置"><Ico n="barrageSet" :s="22" /></button>
          <form class="send" @submit.prevent>
            <Ico n="fontA" :s="18" />
            <input type="text" placeholder="发个友善的弹幕见证当下" aria-label="弹幕" />
            <a href="#">弹幕礼仪 <Ico n="chev" :s="12" /></a>
            <button type="submit">发送</button>
          </form>
          <div class="opts">
            <button type="button" class="q">1080P 高清</button>
            <button type="button" class="q ep">选集</button>
            <button type="button" class="q sp">2.0x</button>
            <button type="button" aria-label="音量"><Ico n="volume" :s="21" /></button>
            <button type="button" aria-label="设置"><Ico n="gear" :s="22" /></button>
            <button type="button" aria-label="画中画"><Ico n="pip" :s="24" /></button>
            <button type="button" aria-label="网页全屏"><Ico n="webfull" :s="23" /></button>
            <button type="button" aria-label="全屏"><Ico n="full" :s="23" /></button>
            <button type="button" aria-label="全景"><Ico n="fan" :s="23" /></button>
          </div>
        </div>
      </div>
      <span class="csdn">CSDN @蓝影铁哥</span>
    </main>
    <footer class="edge"></footer>
  </div>
</template>

<style>
body { margin: 0; background: #000; }
</style>

<style scoped>
.screen, .screen * { box-sizing: border-box; }
.screen {
  min-height: 100vh; display: flex; flex-direction: column; overflow: hidden;
  font-family: "Open Sans", "Noto Sans CJK SC", sans-serif; font-size: 12px; color: #333;
}
button { border: 0; padding: 0; margin: 0; background: none; color: inherit; font: inherit; display: inline-flex; align-items: center; justify-content: center; }
a { color: inherit; text-decoration: none; }
i, em { font-style: normal; }
svg { flex: none; display: block; }
.label { white-space: nowrap; overflow: hidden; flex: 1; }

.strip { height: 34px; flex: none; background: #dee1e6; display: flex; align-items: center; padding-left: 8px; }
.tabs { flex: 0 1 1643px; min-width: 0; display: flex; height: 100%; }
.tab { flex: 1 1 0; min-width: 0; display: flex; align-items: center; padding: 0 9px 0 12px; position: relative; color: #45494d; }
.tab .label { margin: 0 8px; min-width: 0; mask-image: linear-gradient(90deg, #000 80%, transparent); }
.tab button { color: #3c4043; }
.tab:not(.on):not(.before)::after { content: ""; position: absolute; right: 0; top: 7px; height: 20px; width: 1px; background: #85888d; }
.tab.on { background: #fff; border-radius: 8px 8px 0 0; }
.tab .snd { margin-right: 10px; color: #3c4043; }
.add { width: 46px; flex: none; color: #3c4043; }
.wins { margin-left: auto; display: flex; flex: none; color: #111; padding-bottom: 6px; }
.wins button { width: 46px; height: 24px; }

.bar { height: 35px; flex: none; background: #fff; display: flex; align-items: center; padding: 0 6px; color: #5f6368; }
.bar button { width: 32px; height: 28px; }
.bar .off { color: #bbbdc0; }
.omni { flex: 1; height: 28px; border-radius: 14px; background: #f1f3f4; display: flex; align-items: center; margin: 0 6px 0 6px; padding: 0 2px 0 11px; }
.url { flex: 1; margin-left: 10px; font-size: 15px; color: #5f6368; white-space: nowrap; overflow: hidden; }
.url b { font-weight: 400; color: #202124; }
.avatar { width: 22px; height: 22px; border-radius: 11px; background: #dadce4; display: flex; align-items: center; justify-content: center; color: #4f5a6e; }

.marks { height: 34px; flex: none; background: #fff; border-bottom: 1px solid #ccc; display: flex; align-items: center; padding: 0 0 2px 14px; color: #3c4043; }
.marks a { display: flex; align-items: center; gap: 8px; white-space: nowrap; flex: none; }
.yi { width: 16px; height: 16px; border-radius: 2px; background: #1a8cff; color: #fff; font-size: 12px; line-height: 16px; text-align: center; }

.player { flex: 1; position: relative; background: #000; display: flex; min-height: 0; }
.frame { flex: 1; min-width: 0; margin: 0 134px; display: flex; flex-direction: column; background: #f4f4f4; }

.istrip { height: 37px; flex: none; background: #dee1e6; display: flex; align-items: center; padding-left: 8px; font-size: 13px; color: #3c4043; }
.itab { flex: 0 1 257px; height: 100%; display: flex; align-items: center; padding: 0 9px 0 14px; position: relative; }
.itab .label { margin: 0 8px 0 9px; }
.itab:nth-child(-n+2)::after { content: ""; position: absolute; right: -2px; top: 8px; height: 21px; width: 1px; background: #777; }
.itab.hover { background: #eaecef; border-radius: 8px; }
.itab.on { background: #fdfdfd; border-radius: 8px 8px 0 0; }
.istrip .add { width: 50px; }
.onlogo { width: 18px; height: 17px; border-radius: 3px; background: #0a7bf5; color: #fff; font: bold 12px/17px "Open Sans", sans-serif; text-align: center; }
.iwins { margin-left: auto; display: flex; color: #111; }
.iwins button { width: 49px; height: 30px; }

.ibar { height: 39px; flex: none; background: #fff; display: flex; align-items: center; padding: 0 6px 0 6px; color: #4c5054; border-bottom: 1px solid #bbb; }
.ibar button { width: 35px; height: 28px; }
.ibar .off { color: #96999c; }
.iomni { flex: 1; height: 30px; border-radius: 15px; background: #f1f3f4; display: flex; align-items: center; margin-left: 5px; padding: 0 0 0 12px; }
.iomni .url { margin-left: 11px; }
.ibar .who { margin: 0 0 0 4px; width: 40px; }

.tools { height: 41px; flex: none; background: #f2f2f2; border-bottom: 1px solid #aaa; display: flex; align-items: center; padding-left: 4px; color: #111; }
.tool { height: 28px; flex: none; }
.tool.word { font-size: 13px; justify-content: flex-start; padding-left: 8px; color: #222; white-space: nowrap; }
.tool.dim { color: #8f8f8f; }
.tool.mid { color: #777; }
.tool.faint { color: #bbb; }
.tool.pressed { background: #e2e2e2; border: 1px solid #aaa; border-radius: 2px; }
.gap { flex: none; display: flex; justify-content: center; height: 40px; align-items: center; }
.gap::before { content: ""; width: 1px; height: 100%; background: #c4c4c4; }
.gap.short::before { height: 22px; background: #bbb; }
.lookup { margin-left: auto; font-size: 13px; color: #333; gap: 1px; white-space: nowrap; }
.more { width: 72px; }

.work { flex: 1; min-height: 0; display: flex; overflow: hidden; }
.side { flex: none; width: 176px; display: flex; border-right: 1px solid #bbb; }
.palette { width: 165px; overflow: hidden; background: #f6f6f6; }
.search { display: flex; align-items: center; height: 22px; margin: 9px 11px 6px; border: 1px solid #aaa; border-radius: 2px; padding: 0 6px 0 2px; background: #fbfbfb; color: #555; }
.search input { flex: 1; min-width: 0; border: 0; background: none; font: 13px "Noto Sans CJK SC", sans-serif; padding: 0; outline: 0; }
.search input::placeholder { color: #777; }
h3 { margin: 0; height: 35px; border: solid #d2d2d2; border-width: 1px 0; background: #f2f2f2; display: flex; align-items: center; gap: 7px; padding-left: 5px; font: bold 13px "Liberation Sans", "Noto Sans CJK SC", sans-serif; color: #111; }
h3 .edit { margin-left: auto; margin-right: 12px; color: #444; }
.mine { height: 70px; padding: 22px 0 0 21px; }
.shapes { display: grid; grid-template-columns: repeat(4, 1fr); row-gap: 8px; padding: 8px 9px 0 10px; justify-items: center; align-content: start; }
.shapes.basic { height: 371px; }
.shapes.uml { height: 51px; }
.shapes.usecase { height: 52px; }
.rest { border-top: 1px solid #d2d2d2; height: 10px; }
.vscroll { width: 10px; background: #fff; padding: 2px 1px; }
.vscroll i { display: block; width: 8px; height: 333px; border-radius: 4px; background: #c2c2c2; }
.vscroll.outer { width: 9px; flex: none; padding: 256px 0 0; }
.vscroll.outer i { height: 94px; }
.canvas { flex: 1; min-width: 0; position: relative; overflow: hidden; background: #fff; }
.diagram text { fill: #4f4040; font-size: 13px; text-anchor: middle; }
.diagram .h { font-size: 20px; font-weight: 700; fill: #333; text-anchor: start; }
.diagram .k { font-size: 18px; }
.diagram .b { font-weight: 700; fill: #222; }
.diagram .r { font-size: 12px; }
.diagram .dk { fill: #333; font-size: 12px; }
.dots { stroke: #222; stroke-width: 2; stroke-dasharray: 2 3; fill: none; }
.call { stroke: #333; stroke-width: 2; fill: none; }
.ret { stroke: #e09050; stroke-width: 2; stroke-dasharray: 5 2; fill: none; }
.dock { position: absolute; right: 0; top: 0; width: 40px; border: 1px solid #bbb; border-top: 11px solid #444; border-radius: 0 0 0 4px; background: #f5f5f5; display: flex; flex-direction: column; align-items: center; gap: 13px; padding: 10px 0 16px; color: #333; }

.foot { height: 37px; border-top: 1px solid #999; background: #f4f4f4; display: flex; align-items: center; font-size: 14px; flex: none; }
.moreShapes { width: 176px; height: 100%; border-right: 1px solid #aaa; padding: 6px 0 0 33px; }
.moreShapes button { width: 108px; height: 26px; background: #23a8ec; color: #fff; border-radius: 2px; }
.swatch { width: 26px; height: 26px; background: #fff; opacity: .5; margin-left: 10px; }
.invite { margin-left: 13px; gap: 4px; color: #222; }
.hc { margin-left: auto; width: 83px; height: 100%; border-left: 1px solid #999; color: #222; font-weight: 500; }
.fb { width: 81px; height: 100%; background: #505050; color: #fff; font-weight: 500; }
.taskbar { height: 43px; background: #303030; display: flex; justify-content: space-between; color: #c8c8c8; flex: none; }
.apps { display: flex; }
.apps span { width: 52px; height: 43px; display: flex; align-items: center; justify-content: center; }
.apps .run { border-bottom: 3px solid #6a9bd4; width: 44px; margin-left: 7px; }
.apps .cur { width: 53px; margin-left: 5px; background: #606060; }
.typora { width: 24px; height: 24px; border-radius: 4px; background: #eee; color: #333; font: bold 18px/24px "Liberation Serif", serif; text-align: center; }
.tray { display: flex; align-items: center; padding-right: 10px; }
.tray span { width: 26px; display: flex; justify-content: center; }
.tray .wide { width: 36px; }
.tray .zh { font-size: 16px; }
.tray .zh i { background: #999; color: #222; line-height: 16px; }
.tray .nt { width: 44px; position: relative; }
.tray b { position: absolute; left: 24px; top: 4px; width: 16px; height: 16px; border-radius: 8px; background: #333; font: 12px/16px "Liberation Sans", sans-serif; text-align: center; }

.shade { position: absolute; left: 0; right: 0; pointer-events: none; }
.shade.top { top: 0; height: 200px; background: linear-gradient(rgba(0,0,0,.32), rgba(0,0,0,.24) 30%, rgba(0,0,0,.17) 48%, rgba(0,0,0,.11) 62%, transparent); }
.shade.bottom { bottom: 0; height: 88px; background: linear-gradient(transparent, rgba(0,0,0,.28) 52%, rgba(0,0,0,.6)); }
.brand { position: absolute; top: 42px; right: 164px; display: flex; align-items: center; gap: 12px; color: rgba(255,255,255,.2); font-weight: 700; font-size: 32px; line-height: 44px; pointer-events: none; }
.brand em { font-size: 40px; }
h1 { position: absolute; left: 24px; top: 21px; margin: 0; font-size: 20px; line-height: 30px; font-weight: 400; color: #fff; white-space: nowrap; }
.mouse { position: absolute; left: 1062px; top: 10px; }
.helpBtn { position: absolute; right: 28px; top: 20px; }
.tvBtn { position: absolute; right: 38px; bottom: 113px; }
.meter { position: absolute; right: 0; top: 526px; width: 7px; height: 57px; background: #2b3145; border-radius: 4px 0 0 4px; padding: 28px 1px 4px 3px; }
.meter i { display: block; height: 25px; background: repeating-linear-gradient(#8fbf5a 0 1px, #2b3145 1px 3px); }

.overlay { position: absolute; left: 12px; right: 12px; bottom: 0; height: 108px; color: #e4e4e4; }
.progress { position: relative; }
.progress > svg:first-child { width: 100%; }
.track { height: 5px; margin-top: 1px; background: rgba(255,255,255,.2); position: relative; }
.track i { position: absolute; left: 0; top: 0; bottom: 0; }
.buf { width: 38%; background: rgba(255,255,255,.3); }
.done { width: 28%; background: #00aeec; }
.thumb { position: absolute; right: -9px; top: 11px; }
.controls { display: flex; align-items: center; height: 34px; margin-top: 20px; }
.pn { width: 54px; }
.time { font: 14px "Liberation Sans", sans-serif; margin: 0 0 0 16px; width: 286px; white-space: nowrap; }
.dm { width: 42px; }
.send { flex: 0 1 644px; min-width: 0; height: 34px; margin-left: 9px; display: flex; align-items: center; background: rgba(255,255,255,.32); border-radius: 6px 8px 8px 6px; overflow: hidden; padding-left: 10px; font-size: 14px; }
.send input { flex: 1; min-width: 0; border: 0; outline: 0; background: none; font: 14px "Noto Sans CJK SC", sans-serif; margin-left: 7px; padding: 0; color: #eee; }
.send input::placeholder { color: #b0b0b0; }
.send a { color: #b8b8b8; display: flex; align-items: center; gap: 2px; margin-right: 7px; white-space: nowrap; }
.send a svg { rotate: -90deg; }
.send button { width: 63px; height: 100%; background: #00aeec; color: #fff; }
.opts { margin-left: auto; display: flex; align-items: center; color: #e4e4e4; }
.opts button { width: 54px; flex: none; }
.opts .q { font-size: 16px; font-weight: 600; width: auto; white-space: nowrap; }
.opts .ep { margin-left: 20px; }
.opts .sp { margin: 0 17px 0 28px; }
.csdn { position: absolute; right: 15px; bottom: 0; font-size: 18px; line-height: 24px; color: #c0c0c0; }
.edge { height: 8px; flex: none; background: linear-gradient(90deg, #dfe9f8, #cfdcfa 30%, #d4dcf8 60%, #e8f0fa); }
</style>
